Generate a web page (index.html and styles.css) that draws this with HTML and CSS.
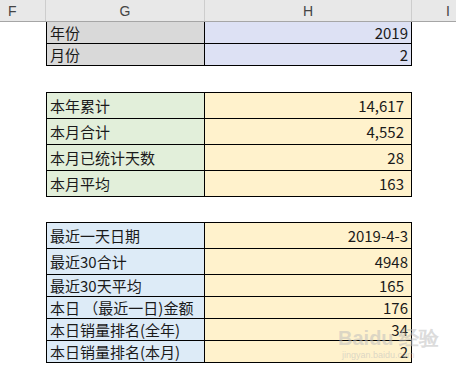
FILE: index.html
```html
<!DOCTYPE html>
<html>
<head>
<meta charset="utf-8">
<link rel="stylesheet" href="styles.css">
</head>
<body>
<div class="page">
  <div class="hdr">
    <div class="hc hf">F</div>
    <div class="hc hg">G</div>
    <div class="hc hh">H</div>
    <div class="hc hi">I</div>
  </div>
  <div class="sheet">
    <div class="tbl t1">
      <div class="c k grey">年份</div><div class="c v lav">2019</div>
      <div class="c k grey">月份</div><div class="c v lav">2</div>
    </div>
    <div class="tbl t2">
      <div class="c k green">本年累计</div><div class="c v yel p7">14,617</div>
      <div class="c k green">本月合计</div><div class="c v yel p7">4,552</div>
      <div class="c k green">本月已统计天数</div><div class="c v yel p7">28</div>
      <div class="c k green">本月平均</div><div class="c v yel p7">163</div>
    </div>
    <div class="tbl t3">
      <div class="c k blue">最近一天日期</div><div class="c v yel">2019-4-3</div>
      <div class="c k blue">最近30合计</div><div class="c v yel">4948</div>
      <div class="c k blue">最近30天平均</div><div class="c v yel p7">165</div>
      <div class="c k blue">本日&nbsp;（最近一日)金额</div><div class="c v yel">176</div>
      <div class="c k blue">本日销量排名(全年)</div><div class="c v yel">34</div>
      <div class="c k blue">本日销量排名(本月)</div><div class="c v yel">2</div>
    </div>
  </div>
  <div class="wm">
    <div class="wm1">Bai<span class="paw">du</span> 经验</div>
    <div class="wm2">jingyan.baidu.com</div>
  </div>
</div>
</body>
</html>
```
FILE: styles.css
```css
html, body {
  margin: 0;
  padding: 0;
  background: #ffffff;
}
.page {
  position: relative;
  width: 456px;
  height: 375px;
  overflow: hidden;
  font-family: "Noto Sans CJK SC", "Microsoft YaHei", sans-serif;
  color: #1a1a1a;
}
.hdr {
  display: grid;
  grid-template-columns: 46px 159px 207px 1fr;
  height: 21px;
  background: #e8e8e8;
  border-bottom: 1px solid #a6a6a6;
  font-family: "Liberation Sans", Arial, sans-serif;
  font-size: 14px;
  color: #444;
}
.hc {
  display: flex;
  align-items: center;
  justify-content: center;
  border-right: 1px solid #cdcdcd;
}
.hf { justify-content: flex-start; padding-left: 8px; }
.hi { justify-content: flex-start; padding-left: 34px; border-right: none; }
.sheet {
  padding-left: 46px;
  display: flex;
  flex-direction: column;
}
.tbl {
  display: grid;
  grid-template-columns: 158px 207px;
  border-left: 1px solid #000;
  width: 365px;
}
.t1 { grid-auto-rows: 22px; }
.t2 { margin-top: 26px; border-top: 1px solid #000; grid-auto-rows: 26px; }
.t3 {
  margin-top: 25px;
  border-top: 1px solid #000;
  grid-template-rows: 26px 26px 22px 22px 22px 22px;
}
.c {
  box-sizing: border-box;
  border-right: 1px solid #000;
  border-bottom: 1px solid #000;
  display: flex;
  align-items: center;
  font-size: 15px;
  line-height: 1;
  white-space: nowrap;
}
.k { padding-left: 3px; }
.v { justify-content: flex-end; padding-right: 3px; }
.v.p7 { padding-right: 7px; }
.grey { background: #d9d9d9; }
.lav { background: #dde1f4; }
.green { background: #e2efda; }
.yel { background: #fff2cc; }
.blue { background: #ddebf7; }
.wm {
  position: absolute;
  left: 338px;
  top: 327px;
  color: rgba(190, 190, 190, 0.55);
  font-family: "Liberation Sans", Arial, sans-serif;
}
.wm1 { font-size: 20px; font-weight: bold; line-height: 22px; }
.wm2 { font-size: 9px; line-height: 12px; margin-left: 4px; }
```
